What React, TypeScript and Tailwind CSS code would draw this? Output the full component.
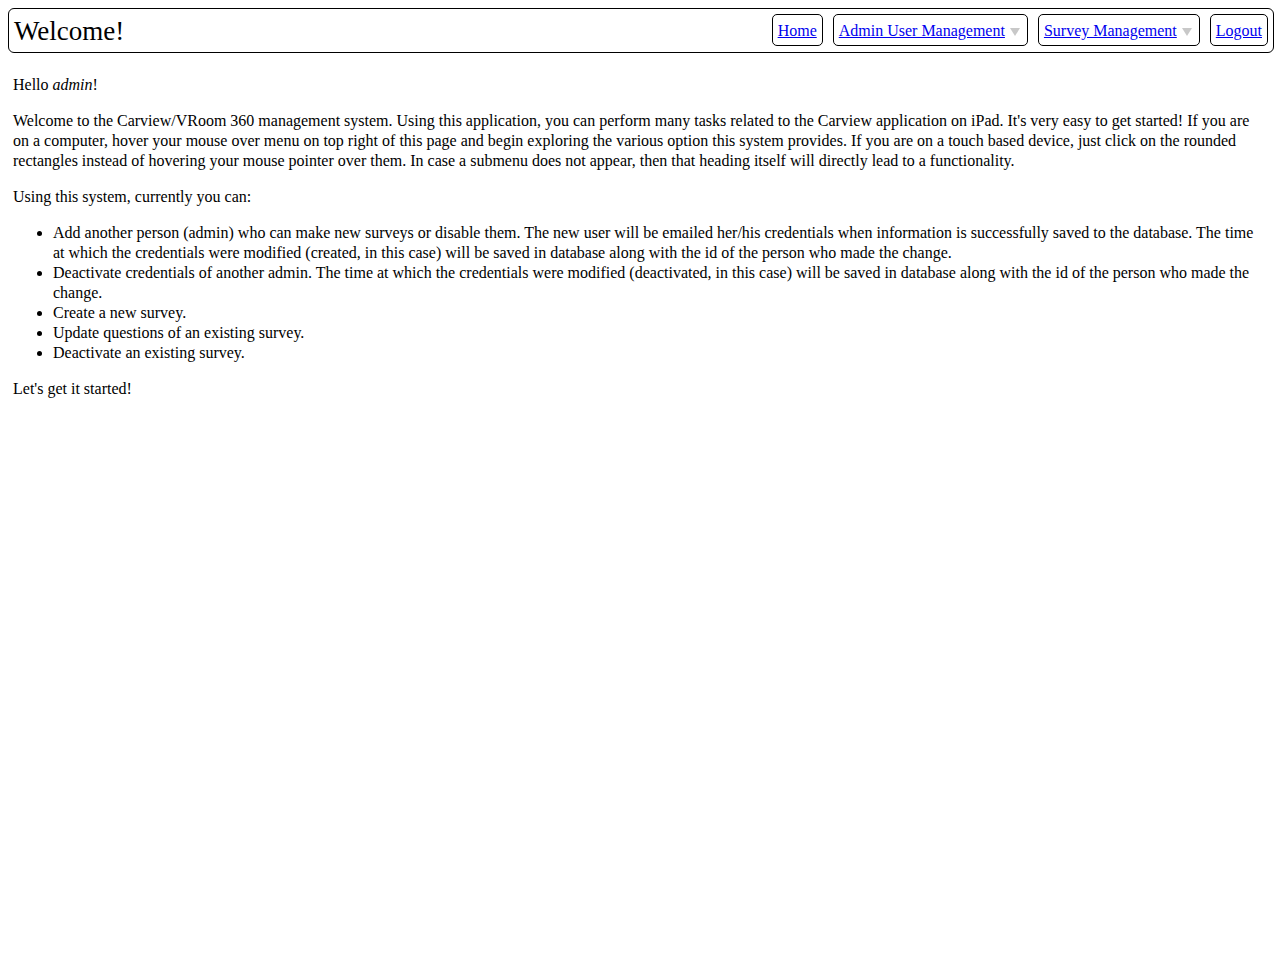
import React from "react";

const menu = [
  { label: "Home", arrow: false },
  { label: "Admin User Management", arrow: true },
  { label: "Survey Management", arrow: true },
  { label: "Logout", arrow: false },
];

function Arrow() {
  return (
    <svg width="10" height="8" viewBox="0 0 10 8" className="ml-[5px] mt-[2px]">
      <polygon points="0,0 10,0 5,8" fill="#c8c8c8" />
    </svg>
  );
}

export default function App() {
  return (
    <div className="min-h-screen bg-white p-2 text-black text-[16px] leading-[20px] font-['Liberation_Serif','Times_New_Roman',serif]">
      <div className="flex h-[45px] w-[1266px] items-center justify-between rounded-[6px] border border-black pl-[5px] pr-[5px]">
        <h1 className="text-[27px] leading-[30px] font-normal">Welcome!</h1>
        <nav className="flex items-start gap-[10px] self-start mt-[5px]">
          {menu.map((m) => (
            <div
              key={m.label}
              className={`flex h-[32px] items-center rounded-[5px] border border-black pl-[5px] pt-[2px] ${
                m.arrow ? "pr-[7px]" : "pr-[5px]"
              }`}
            >
              <a href="#" className="text-[#0000ee] underline">
                {m.label}
              </a>
              {m.arrow && <Arrow />}
            </div>
          ))}
        </nav>
      </div>

      <div className="pt-[6px] px-[5px]">
        <p className="my-4">
          Hello <i>admin</i>!
        </p>
        <p className="my-4">
          Welcome to the Carview/VRoom 360 management system. Using this application, you can perform many
          tasks related to the Carview application on iPad. It's very easy to get started! If you are on a
          computer, hover your mouse over menu on top right of this page and begin exploring the various option
          this system provides. If you are on a touch based device, just click on the rounded rectangles instead
          of hovering your mouse pointer over them. In case a submenu does not appear, then that heading itself
          will directly lead to a functionality.
        </p>
        <p className="my-4">Using this system, currently you can:</p>
        <ul className="my-4 list-disc pl-10">
          <li>
            Add another person (admin) who can make new surveys or disable them. The new user will be emailed
            her/his credentials when information is successfully saved to the database. The time at which the
            credentials were modified (created, in this case) will be saved in database along with the id of the
            person who made the change.
          </li>
          <li>
            Deactivate credentials of another admin. The time at which the credentials were modified
            (deactivated, in this case) will be saved in database along with the id of the person who made the
            change.
          </li>
          <li>Create a new survey.</li>
          <li>Update questions of an existing survey.</li>
          <li>Deactivate an existing survey.</li>
        </ul>
        <p className="my-4">Let's get it started!</p>
      </div>
    </div>
  );
}
